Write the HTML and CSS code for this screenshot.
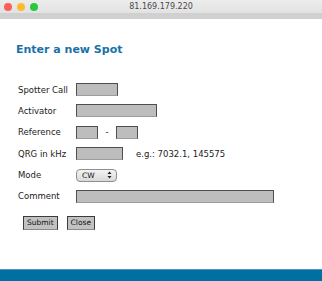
FILE: index.html
```html
<!DOCTYPE html>
<html lang="en">
<head>
  <meta charset="UTF-8" />
  <meta name="viewport" content="width=device-width, initial-scale=1.0"/>
  <title>81.169.179.220</title>
  <link rel="stylesheet" href="styles.css">
</head>
<body>
  <div class="window">
    <div class="titlebar">
      <div class="lights">
        <span class="light red"></span>
        <span class="light yellow"></span>
        <span class="light green"></span>
      </div>
      <div class="title">81.169.179.220</div>
    </div>
    <div class="toolbar"></div>

    <div class="content">
      <h1>Enter a new Spot</h1>

      <form class="spot-form">
        <label>Spotter Call</label>
        <div class="field"><input type="text" class="w-call"></div>

        <label>Activator</label>
        <div class="field"><input type="text" class="w-activator"></div>

        <label>Reference</label>
        <div class="field">
          <input type="text" class="w-ref">
          <span class="dash">-</span>
          <input type="text" class="w-ref">
        </div>

        <label>QRG in kHz</label>
        <div class="field">
          <input type="text" class="w-qrg">
          <span class="hint">e.g.: 7032.1, 145575</span>
        </div>

        <label>Mode</label>
        <div class="field">
          <span class="select-wrap">
            <select>
              <option>CW</option>
              <option>SSB</option>
              <option>FM</option>
            </select>
            <svg class="arrows" width="5" height="8" viewBox="0 0 5 8">
              <path d="M0.5 3 L2.5 0.5 L4.5 3 Z M0.5 5 L2.5 7.5 L4.5 5 Z" fill="#222"/>
            </svg>
          </span>
        </div>

        <label>Comment</label>
        <div class="field"><input type="text" class="w-comment"></div>
      </form>

      <div class="buttons">
        <button type="button">Submit</button>
        <button type="button">Close</button>
      </div>
    </div>

    <div class="footer"></div>
  </div>
</body>
</html>
```

FILE: styles.css
```css
body {
  margin: 0;
  font-family: "DejaVu Sans", Verdana, sans-serif;
  background: #fff;
  color: #222;
}

.window {
  min-height: 100vh;
  display: flex;
  flex-direction: column;
}

.titlebar {
  height: 13px;
  background: linear-gradient(#ececec, #e2e2e2);
  display: flex;
  align-items: center;
}

.lights {
  display: flex;
  gap: 5px;
  padding-left: 4px;
}

.light {
  width: 8px;
  height: 8px;
  border-radius: 50%;
}

.red { background: #fc5f57; }
.yellow { background: #fdbc2e; }
.green { background: #2ac840; }

.title {
  flex: 1;
  text-align: center;
  font-size: 8px;
  color: #4a4a4a;
  margin-right: 38px;
}

.toolbar {
  height: 6px;
  background: #d0d0d0;
}

.content {
  padding: 24px 16px 0;
}

h1 {
  margin: 0;
  font-size: 11px;
  line-height: 13px;
  font-weight: bold;
  color: #1a72a7;
}

.spot-form {
  display: grid;
  grid-template-columns: 58px auto;
  row-gap: 8.4px;
  align-items: center;
  margin: 27px 0 0 2px;
  font-size: 8.5px;
}

.field {
  display: flex;
  align-items: center;
  height: 13px;
}

input {
  box-sizing: border-box;
  height: 13px;
  padding: 0 2px;
  margin: 0;
  background: #bdbdbd;
  border: 1px solid #4e4e4e;
  border-bottom-color: #9c9c9c;
  font-size: 8px;
}

.w-call { width: 42px; }
.w-activator { width: 81px; }
.w-ref { width: 22px; }
.w-qrg { width: 47px; }
.w-comment { width: 198px; }

.dash {
  margin: 0 7.5px;
}

.hint {
  margin-left: 13px;
}

.select-wrap {
  position: relative;
  display: inline-block;
  height: 13px;
}

select {
  appearance: none;
  -webkit-appearance: none;
  box-sizing: border-box;
  width: 41px;
  height: 13px;
  margin: 0;
  padding: 0 0 0 5px;
  border: 1px solid #8e8e8e;
  border-radius: 4px;
  background: linear-gradient(#f4f4f4, #d9d9d9);
  font-family: "DejaVu Sans", sans-serif;
  font-size: 7.5px;
  color: #111;
}

.arrows {
  position: absolute;
  right: 5px;
  top: 2.5px;
}

.buttons {
  display: flex;
  gap: 9px;
  margin: 13px 0 0 7px;
}

button {
  box-sizing: border-box;
  height: 14px;
  padding: 0 3px;
  background: #c2c2c2;
  border: 1px solid #3c3c3c;
  border-bottom-color: #8a8a8a;
  font-family: "DejaVu Sans", sans-serif;
  font-size: 7.5px;
  color: #111;
}

.footer {
  margin-top: auto;
  height: 11px;
  background: #0070a3;
  border-top: 1px solid #4d97bf;
}
```
